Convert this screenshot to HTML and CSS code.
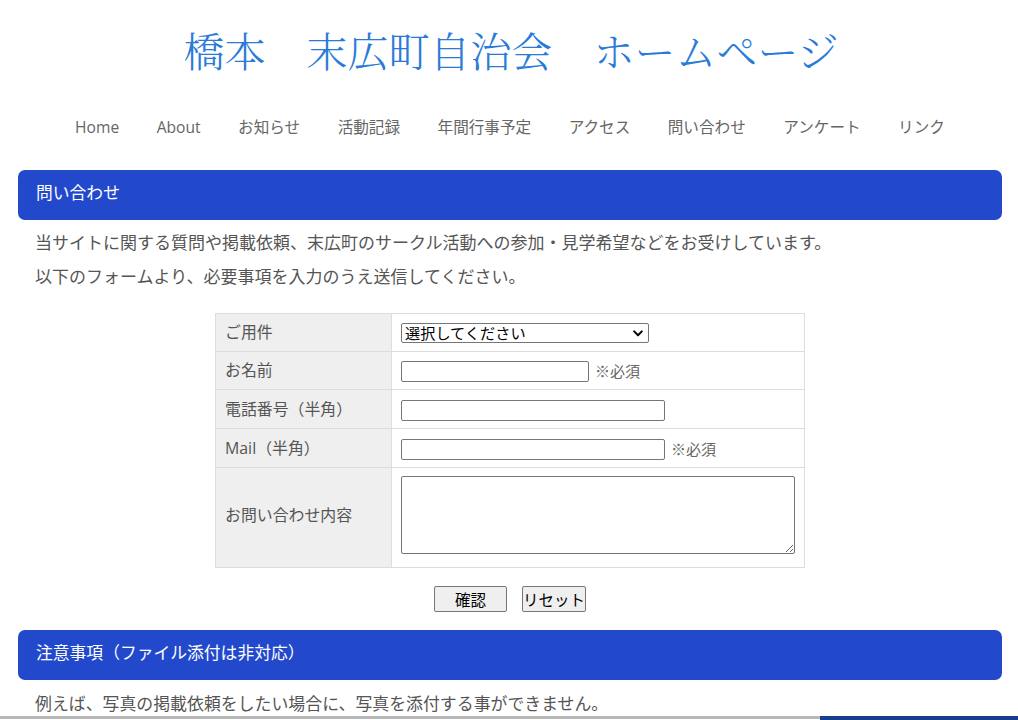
FILE: index.html
```html
<!DOCTYPE html>
<html lang="ja">
<head>
<meta charset="utf-8">
<title>問い合わせ - 橋本　末広町自治会　ホームページ</title>
<link rel="stylesheet" href="styles.css">
</head>
<body>
<header class="site-header">
  <h1 class="site-title">橋本　末広町自治会　ホームページ</h1>
  <nav class="global-nav">
    <ul class="nav-list">
      <li><a href="#">Home</a></li>
      <li><a href="#">About</a></li>
      <li><a href="#">お知らせ</a></li>
      <li><a href="#">活動記録</a></li>
      <li><a href="#">年間行事予定</a></li>
      <li><a href="#">アクセス</a></li>
      <li><a href="#">問い合わせ</a></li>
      <li><a href="#">アンケート</a></li>
      <li><a href="#">リンク</a></li>
    </ul>
  </nav>
</header>

<main class="content">
  <section class="section">
    <h2 class="section-bar">問い合わせ</h2>
    <p class="lead">当サイトに関する質問や掲載依頼、末広町のサークル活動への参加・見学希望などをお受けしています。</p>
    <p class="lead">以下のフォームより、必要事項を入力のうえ送信してください。</p>

    <form class="contact-form">
      <table class="form-table">
        <tr>
          <th>ご用件</th>
          <td>
            <span class="select-wrap">
              <select class="f-select">
                <option>選択してください</option>
                <option>質問</option>
                <option>掲載依頼</option>
                <option>サークル活動への参加・見学希望</option>
                <option>その他</option>
              </select>
              <svg class="select-arrow" width="10" height="7" viewBox="0 0 10 7" aria-hidden="true">
                <path d="M1.2 1.4 L5 5.2 L8.8 1.4" fill="none" stroke="#000" stroke-width="2" stroke-linecap="round" stroke-linejoin="round"/>
              </svg>
            </span>
          </td>
        </tr>
        <tr>
          <th>お名前</th>
          <td><input type="text" class="f-input f-name"><span class="req">※必須</span></td>
        </tr>
        <tr>
          <th>電話番号（半角）</th>
          <td><input type="text" class="f-input f-wide"></td>
        </tr>
        <tr>
          <th>Mail（半角）</th>
          <td><input type="text" class="f-input f-wide"><span class="req">※必須</span></td>
        </tr>
        <tr class="row-message">
          <th>お問い合わせ内容</th>
          <td><textarea class="f-textarea"></textarea></td>
        </tr>
      </table>
      <div class="form-buttons">
        <button type="button" class="btn btn-confirm">確認</button>
        <button type="reset" class="btn btn-reset">リセット</button>
      </div>
    </form>
  </section>

  <section class="section">
    <h2 class="section-bar">注意事項（ファイル添付は非対応）</h2>
    <p class="note">例えば、写真の掲載依頼をしたい場合に、写真を添付する事ができません。</p>
  </section>
</main>

<footer class="site-footer">
  <div class="footer-main"></div>
  <div class="footer-side"></div>
</footer>
</body>
</html>
```

FILE: styles.css
```css
html, body {
  margin: 0;
  padding: 0;
  background: #fff;
}

body {
  font-family: "Open Sans", "Noto Sans CJK JP", sans-serif;
  font-size: 15.6px;
  color: #555;
}

.site-title {
  margin: 0;
  padding-top: 26px;
  padding-left: 4px;
  font-family: "Noto Serif CJK JP", "Liberation Serif", "Noto Sans CJK JP", serif;
  font-size: 41px;
  line-height: 48px;
  font-weight: 300;
  color: #2a7bd8;
  text-align: center;
}

.global-nav {
  margin-top: 43px;
}

.nav-list {
  list-style: none;
  margin: 0;
  padding: 0 0 0 2px;
  display: flex;
  justify-content: center;
  gap: 37.5px;
}

.nav-list a {
  display: block;
  font-size: 15.6px;
  line-height: 20px;
  color: #666;
  text-decoration: none;
}

.content {
  width: 984px;
  margin: 33px 16px 0 18px;
}

.section-bar {
  margin: 0;
  height: 50px;
  padding: 0 18px;
  box-sizing: border-box;
  background: #2249cc;
  border-radius: 7px;
  color: #fff;
  font-size: 16.8px;
  font-weight: normal;
  line-height: 46px;
}

.lead {
  margin: 0;
  padding: 0 17px;
  font-size: 17px;
  line-height: 34px;
  color: #555;
}

.section-bar + .lead {
  margin-top: 6px;
}

.contact-form {
  margin-top: 19px;
}

.form-table {
  margin: 0 auto;
  width: 590px;
  border-collapse: collapse;
  border: 1px solid #ddd;
}

.form-table th,
.form-table td {
  border: 1px solid #ddd;
  padding: 8px 9px 7.5px;
  line-height: 21px;
  vertical-align: middle;
  text-align: left;
}

.form-table th {
  width: 158px;
  background: #efefef;
  font-weight: normal;
  font-size: 15.9px;
  color: #555;
}

.form-table td {
  background: #fff;
  font-size: 15px;
}

.select-wrap {
  position: relative;
  display: inline-block;
  vertical-align: middle;
  line-height: 0;
  margin-top: -2px;
}

.f-select {
  -webkit-appearance: none;
  appearance: none;
  display: block;
  width: 248px;
  height: 20px;
  margin: 0;
  padding: 0 20px 0 3px;
  box-sizing: border-box;
  font-family: "Open Sans", "Noto Sans CJK JP", sans-serif;
  font-size: 15.2px;
  line-height: 18px;
  color: #000;
  border: 1px solid #767676;
  border-radius: 2px;
  background: #fff;
}

.select-arrow {
  position: absolute;
  right: 6px;
  top: 7px;
  pointer-events: none;
}

.f-input {
  height: 21px;
  margin: 0;
  padding: 1px 2px;
  box-sizing: border-box;
  border: 1px solid #767676;
  border-radius: 2px;
  font-size: 13.33px;
  vertical-align: middle;
}

.f-name {
  width: 188px;
}

.f-wide {
  width: 264px;
}

.req {
  margin-left: 6px;
  font-size: 15px;
  color: #666;
  vertical-align: middle;
}

.row-message td,
.row-message th {
  padding-top: 8px;
  padding-bottom: 13px;
}

.f-textarea {
  display: block;
  width: 394px;
  height: 78px;
  margin: 0;
  box-sizing: border-box;
  border: 1px solid #767676;
  border-radius: 2px;
  resize: both;
}

.form-buttons {
  display: flex;
  justify-content: center;
  gap: 15px;
  margin-top: 18px;
  margin-bottom: 18px;
}

.btn {
  height: 26px;
  padding: 0;
  font-family: "Open Sans", "Noto Sans CJK JP", sans-serif;
  font-size: 15.5px;
  color: #000;
  background: #efefef;
  border: 1px solid #767676;
  border-radius: 2px;
}

.btn-confirm {
  width: 73px;
}

.btn-reset {
  width: 64px;
}

.note {
  margin: 12px 0 0;
  padding: 0 17px;
  font-size: 16.9px;
  line-height: 24px;
  color: #555;
}

.site-footer {
  display: flex;
  height: 40px;
}

.footer-main {
  flex: 1;
  border-top: 3px solid #b8b8b8;
  background: #fff;
}

.footer-side {
  width: 198px;
  background: #1b3d8f;
}
```
